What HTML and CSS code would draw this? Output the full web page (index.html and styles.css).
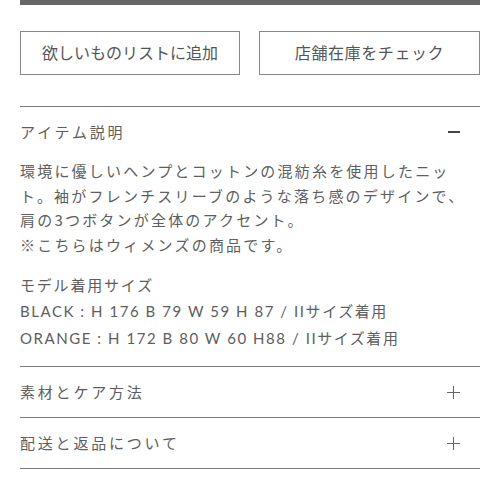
FILE: index.html
```html
<!DOCTYPE html>
<html lang="ja">
<head>
<meta charset="utf-8">
<link rel="stylesheet" href="styles.css">
</head>
<body>
<div class="page">
  <div class="topbar"></div>
  <div class="buttons">
    <button class="btn">欲しいものリストに追加</button>
    <button class="btn btn-right">店舗在庫をチェック</button>
  </div>
  <section class="section open">
    <div class="head">
      <span class="title">アイテム説明</span>
      <span class="minus"></span>
    </div>
    <p class="desc">環境に優しいヘンプとコットンの混紡糸を使用したニット。袖がフレンチスリーブのような落ち感のデザインで、肩の3つボタンが全体のアクセント。<br>※こちらはウィメンズの商品です。</p>
    <div class="model">
      <div class="model-title">モデル着用サイズ</div>
      <div class="model-line">BLACK : H 176 B 79 W 59 H 87 / IIサイズ着用</div>
      <div class="model-line">ORANGE : H 172 B 80 W 60 H88 / IIサイズ着用</div>
    </div>
  </section>
  <section class="section">
    <div class="head">
      <span class="title">素材とケア方法</span>
      <span class="plus"></span>
    </div>
  </section>
  <section class="section last">
    <div class="head">
      <span class="title">配送と返品について</span>
      <span class="plus"></span>
    </div>
  </section>
</div>
</body>
</html>
```
FILE: styles.css
```css
html, body {
  margin: 0;
  padding: 0;
  background: #fff;
}
body {
  font-family: "Noto Sans CJK JP", "Noto Sans", sans-serif;
  color: #5e5e5e;
}
.page {
  padding: 0 20px;
}
.topbar {
  height: 5px;
  background: #666;
}
.buttons {
  margin-top: 26px;
  display: grid;
  grid-template-columns: 220px 221px;
  column-gap: 19px;
}
.btn {
  height: 44px;
  background: #fff;
  border: 1px solid #888;
  font-family: "Noto Sans CJK JP", sans-serif;
  font-size: 16px;
  color: #555;
  padding: 0 0 2px;
  letter-spacing: 0;
}
.btn-right {
  letter-spacing: 0.6px;
}
.section {
  border-top: 1px solid #7a7a7a;
  margin-top: 31px;
}
.section + .section {
  margin-top: 0;
}
.section.last {
  border-bottom: 1px solid #7a7a7a;
}
.head {
  height: 50px;
  display: flex;
  align-items: center;
  justify-content: space-between;
}
.title {
  font-size: 15px;
  letter-spacing: 2.8px;
  color: #5e5e5e;
  margin-top: -2px;
}
.minus {
  width: 12px;
  height: 1.5px;
  background: #444;
  margin-right: 20px;
}
.plus {
  position: relative;
  width: 13px;
  height: 13px;
  margin-right: 20px;
}
.plus::before, .plus::after {
  content: "";
  position: absolute;
  background: #666;
}
.plus::before {
  left: 0;
  right: 0;
  top: 6px;
  height: 1px;
}
.plus::after {
  top: 0;
  bottom: 0;
  left: 6px;
  width: 1px;
}
.desc {
  margin: 2px 0 0;
  font-size: 15px;
  line-height: 24.5px;
  letter-spacing: 2.2px;
}
.model {
  margin-top: 14px;
  padding-bottom: 14px;
}
.model-title {
  font-size: 15px;
  line-height: 27px;
  letter-spacing: 1.8px;
}
.model-line {
  font-family: "Lato", "Noto Sans CJK JP", sans-serif;
  font-size: 15px;
  line-height: 27px;
  letter-spacing: 1.55px;
}
```
